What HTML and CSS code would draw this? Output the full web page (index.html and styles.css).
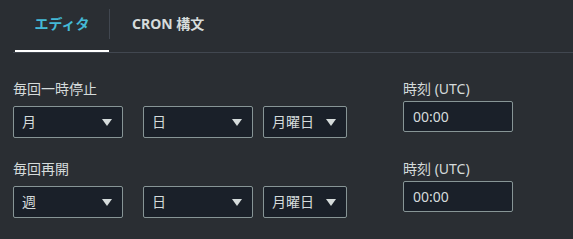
FILE: index.html
```html
<!DOCTYPE html>
<html lang="ja">
<head>
<meta charset="utf-8">
<link rel="stylesheet" href="styles.css">
</head>
<body>
<div class="page">
  <div class="tabs">
    <div class="tab tab-active"><span class="tab-label">エディタ</span></div>
    <div class="tab-sep"></div>
    <div class="tab"><span class="tab-label">CRON 構文</span></div>
  </div>

  <div class="row row-first">
    <div class="group">
      <div class="label">毎回一時停止</div>
      <div class="selects">
        <div class="select w-wide"><span class="val">月</span><span class="caret"></span></div>
        <div class="select w-wide gap-big"><span class="val">日</span><span class="caret"></span></div>
        <div class="select w-narrow gap-small"><span class="val">月曜日</span><span class="caret"></span></div>
      </div>
    </div>
    <div class="time">
      <div class="label">時刻 (UTC)</div>
      <div class="input">00:00</div>
    </div>
  </div>

  <div class="row row-second">
    <div class="group">
      <div class="label">毎回再開</div>
      <div class="selects">
        <div class="select w-wide"><span class="val">週</span><span class="caret"></span></div>
        <div class="select w-wide gap-big"><span class="val">日</span><span class="caret"></span></div>
        <div class="select w-narrow gap-small"><span class="val">月曜日</span><span class="caret"></span></div>
      </div>
    </div>
    <div class="time">
      <div class="label">時刻 (UTC)</div>
      <div class="input">00:00</div>
    </div>
  </div>
</div>
</body>
</html>
```

FILE: styles.css
```css
html, body {
  margin: 0;
  padding: 0;
  background: #2a2e33;
}
body {
  width: 573px;
  height: 239px;
  overflow: hidden;
  font-family: "Noto Sans", "Noto Sans CJK JP", sans-serif;
  font-size: 14px;
  color: #d5dbdb;
}
.page {
  padding: 0;
}
.tabs {
  display: flex;
  margin-left: 13px;
  padding-left: 2px;
  border-bottom: 1px solid #414750;
}
.tab {
  box-sizing: border-box;
  height: 52px;
  padding: 9px 20px 0 20px;
  font-weight: 700;
  color: #d5dbdb;
}
.tab-active {
  width: 94px;
  color: #44b9d6;
  border-bottom: 2px solid #ffffff;
  text-align: center;
  padding-left: 0;
  padding-right: 0;
}
.tab-label {
  display: block;
  line-height: 30px;
}
.tab-sep {
  width: 1px;
  height: 30px;
  margin-top: 9px;
  background: #414750;
}
.tab + .tab-sep + .tab {
  padding-left: 22px;
}
.row {
  display: flex;
  padding-left: 13px;
}
.row-first {
  margin-top: 26px;
}
.row-second {
  margin-top: 21px;
}
.label {
  line-height: 20px;
  height: 20px;
}
.selects {
  display: flex;
  margin-top: 7px;
}
.select {
  box-sizing: border-box;
  height: 32px;
  border: 1px solid #879596;
  border-radius: 2px;
  background: #1a2029;
  display: flex;
  align-items: center;
  padding: 0 10px 0 8px;
  justify-content: space-between;
}
.w-wide { width: 110px; }
.w-narrow { width: 84px; }
.gap-big { margin-left: 20px; }
.gap-small { margin-left: 10px; }
.val {
  line-height: 20px;
}
.caret {
  width: 0;
  height: 0;
  border-left: 5px solid transparent;
  border-right: 5px solid transparent;
  border-top: 7px solid #d5dbdb;
}
.time {
  margin-left: 56px;
}
.input {
  box-sizing: border-box;
  width: 110px;
  height: 31px;
  margin-top: 2px;
  border: 1px solid #879596;
  border-radius: 2px;
  background: #1a2029;
  padding-left: 9px;
  line-height: 29px;
}
```
